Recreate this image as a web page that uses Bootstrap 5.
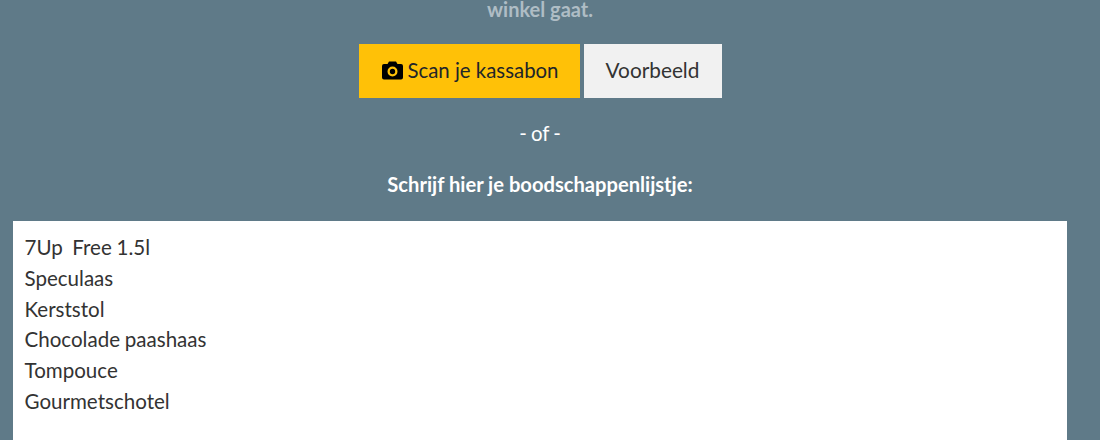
<!DOCTYPE html>
<html lang="nl">
<head>
<meta charset="utf-8">
<title>Boodschappen</title>
<link href="https://cdn.jsdelivr.net/npm/bootstrap@5.3.0/dist/css/bootstrap.min.css" rel="stylesheet">
<style>
html, body { height: 440px; overflow: hidden; }
body { background: #5f7a88; font-family: Lato, "Liberation Sans", sans-serif; font-size: 20px; line-height: 30px; color: #fff; }
.page-wrap { margin-top: -6px; padding: 0 33px 0 13px; }
.intro-text { color: #afbdc5; font-weight: 700; height: 30px; }
.btn-row { margin-top: 20px; gap: 4px; }
.act-btn { height: 54px; border: 0; border-radius: 0; font-size: 20.4px; line-height: 30px; padding: 0 0 2px 23px; display: inline-flex; align-items: center; gap: 5px; white-space: nowrap; }
.act-scan { background: #ffc107; color: #212529; width: 221px; }
.act-demo { background: #f1f1f1; color: #333; width: 138px; justify-content: center; padding: 0 0 2px; font-size: 20.8px; }
.of-text { margin-top: 20px; font-size: 20.4px; word-spacing: -1px; }
.list-label { margin-top: 21px; font-weight: 700; font-size: 20.15px; }
.list-area { display: block; width: 100%; height: 300px; margin-top: 22px; padding: 11px 11.5px; border: 0; border-radius: 0; background: #fff; color: #333; font-size: 20.55px; word-spacing: -0.5px; line-height: 30.8px; font-family: inherit; resize: none; }
</style>
</head>
<body>
<div class="page-wrap">
  <div class="intro-text text-center">winkel gaat.</div>
  <div class="btn-row d-flex justify-content-center">
    <button type="button" class="btn act-btn act-scan">
      <svg width="21" height="19" viewBox="0 0 21 19" aria-hidden="true"><path fill="#000" fill-rule="evenodd" d="M7 0.5h7l1.5 2.5h3.5a2 2 0 0 1 2 2v11.5a2 2 0 0 1-2 2h-17a2 2 0 0 1-2-2v-11.5a2 2 0 0 1 2-2h3.5zM10.5 5.5a5 5 0 1 0 0 10a5 5 0 0 0 0-10zM10.5 7.8a2.7 2.7 0 1 1 0 5.4a2.7 2.7 0 0 1 0-5.4z"/></svg>
      <span>Scan je kassabon</span>
    </button>
    <button type="button" class="btn act-btn act-demo">Voorbeeld</button>
  </div>
  <div class="of-text text-center">- of -</div>
  <div class="list-label text-center">Schrijf hier je boodschappenlijstje:</div>
  <textarea class="list-area" aria-label="Boodschappenlijstje">7Up  Free 1.5l
Speculaas
Kerststol
Chocolade paashaas
Tompouce
Gourmetschotel</textarea>
</div>
</body>
</html>
